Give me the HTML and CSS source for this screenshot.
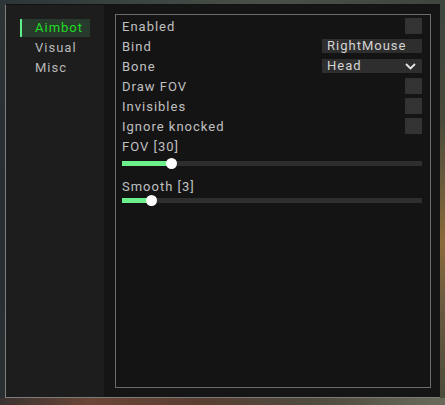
FILE: index.html
```html
<!DOCTYPE html>
<html>
<head>
<meta charset="utf-8">
<link rel="stylesheet" href="styles.css">
</head>
<body>
<div class="window">
  <nav class="sidebar">
    <div class="tab active">Aimbot</div>
    <div class="tab">Visual</div>
    <div class="tab">Misc</div>
  </nav>
  <main class="main">
    <section class="panel">
      <div class="row"><span class="label">Enabled</span><span class="check"></span></div>
      <div class="row"><span class="label">Bind</span><span class="field">RightMouse</span></div>
      <div class="row"><span class="label">Bone</span><span class="field select">Head<svg class="chev" width="11" height="7" viewBox="0 0 11 7"><path d="M1 1 L5.5 5.5 L10 1" fill="none" stroke="#e6e6e6" stroke-width="1.8"/></svg></span></div>
      <div class="row"><span class="label">Draw FOV</span><span class="check"></span></div>
      <div class="row"><span class="label">Invisibles</span><span class="check"></span></div>
      <div class="row"><span class="label">Ignore knocked</span><span class="check"></span></div>
      <div class="slider first">
        <div class="slabel">FOV [30]</div>
        <div class="track"><div class="fill" style="width:50px"><span class="knob"></span></div></div>
      </div>
      <div class="slider second">
        <div class="slabel">Smooth [3]</div>
        <div class="track"><div class="fill" style="width:30px"><span class="knob"></span></div></div>
      </div>
    </section>
  </main>
</div>
</body>
</html>
```
FILE: styles.css
```css
html, body {
  margin: 0;
  padding: 0;
}
body {
  width: 445px;
  height: 405px;
  overflow: hidden;
  background:
    linear-gradient(90deg, #2c3438 0, #3a4440 30%, #4a5048 60%, #3e463e 100%) top / 100% 4px no-repeat,
    linear-gradient(90deg, #3a3230 0, #6a4636 20%, #5a3e32 45%, #4e4a3e 70%, #6a6a5a 100%) bottom / 100% 7px no-repeat,
    linear-gradient(180deg, #3c4640 0, #4a4a3a 30%, #8a6a3a 60%, #6a5a40 75%, #4a4a3a 100%) right / 5px 100% no-repeat,
    linear-gradient(180deg, #2c3436 0, #262e32 50%, #2a3032 100%);
  font-family: Roboto, "DejaVu Sans", sans-serif;
  font-weight: 400;
  letter-spacing: 1px;
}
.window {
  margin: 4px 0 0 5px;
  width: 435px;
  height: 394px;
  box-sizing: border-box;
  display: flex;
  border-left: 1px solid #7c7c7c;
  border-bottom: 1px solid #7c7c7c;
  border-top: 1px solid #121212;
  background: #161616;
}
.sidebar {
  width: 98px;
  background: #1d1d1d;
  padding: 14px 0 0 14px;
  box-sizing: border-box;
  display: flex;
  flex-direction: column;
  gap: 2px;
}
.tab {
  width: 70px;
  height: 18px;
  line-height: 17px;
  box-sizing: border-box;
  padding-left: 13px;
  font-size: 13px;
  color: #b8b8b8;
  border-left: 2px solid transparent;
}
.tab.active {
  background: #273a2c;
  border-left-color: #5ef08a;
  color: #22dd22;
}
.main {
  flex: 1;
  background: #151515;
  padding: 9px 9px 9px 11px;
  display: flex;
}
.panel {
  flex: 1;
  border: 1px solid #6c6c6c;
  background: #141414;
  padding: 1px 8px 0 6px;
  display: flex;
  flex-direction: column;
}
.row {
  height: 20px;
  display: flex;
  align-items: center;
  justify-content: space-between;
}
.label {
  font-size: 13px;
  color: #c0c0c0;
}
.check {
  width: 17px;
  height: 16px;
  background: #333333;
}
.field {
  width: 100px;
  height: 14px;
  line-height: 14px;
  box-sizing: border-box;
  padding-left: 5px;
  background: #2e2e2e;
  font-size: 13px;
  color: #d4d4d4;
  display: flex;
  align-items: center;
  justify-content: space-between;
}
.select {
  padding-right: 6px;
}
.chev {
  display: block;
}
.slider {
  display: flex;
  flex-direction: column;
}
.slider.first {
  margin-top: 3px;
}
.slider.second {
  margin-top: 13px;
}
.slabel {
  height: 16px;
  line-height: 16px;
  font-size: 13px;
  color: #c0c0c0;
}
.first .track {
  margin-top: 6px;
}
.second .track {
  margin-top: 3px;
}
.track {
  height: 5px;
  background: #2e2e2e;
  position: relative;
}
.fill {
  height: 5px;
  background: #6cf08c;
  position: relative;
}
.knob {
  position: absolute;
  right: -5px;
  top: -3px;
  width: 11px;
  height: 11px;
  border-radius: 50%;
  background: #ffffff;
}
```
